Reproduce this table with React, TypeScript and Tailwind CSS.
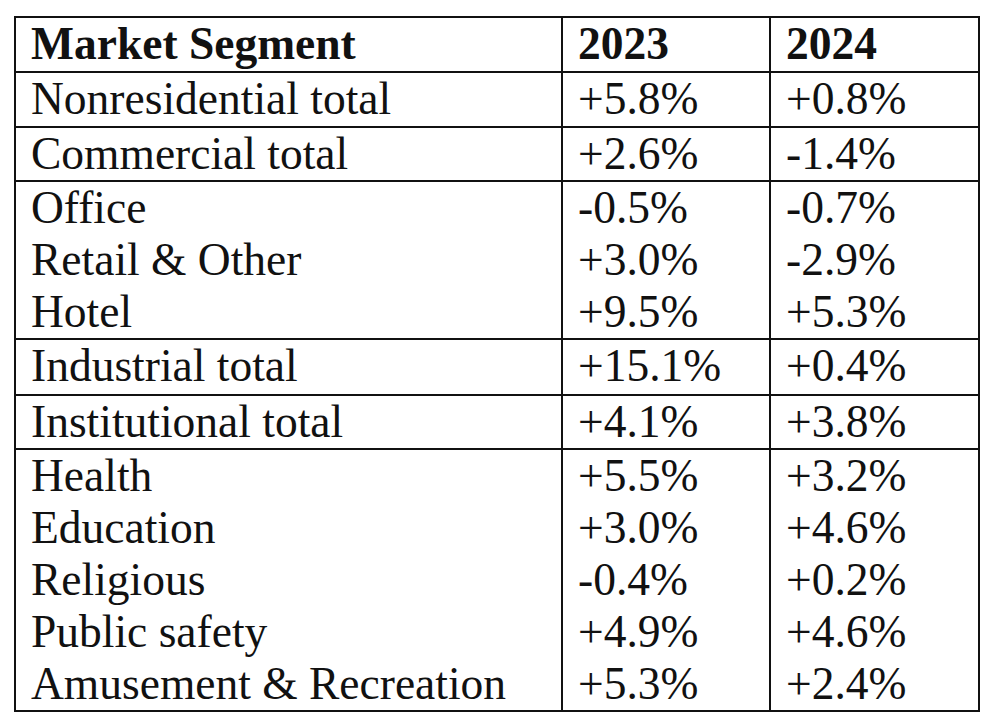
import React from "react";

type Row = {
  labels: string[];
  a: string[];
  b: string[];
  h: string;
};

const rows: Row[] = [
  { labels: ["Nonresidential total"], a: ["+5.8%"], b: ["+0.8%"], h: "h-[55px]" },
  { labels: ["Commercial total"], a: ["+2.6%"], b: ["-1.4%"], h: "h-[54px]" },
  {
    labels: ["Office", "Retail & Other", "Hotel"],
    a: ["-0.5%", "+3.0%", "+9.5%"],
    b: ["-0.7%", "-2.9%", "+5.3%"],
    h: "h-[158px]",
  },
  { labels: ["Industrial total"], a: ["+15.1%"], b: ["+0.4%"], h: "h-[56px]" },
  { labels: ["Institutional total"], a: ["+4.1%"], b: ["+3.8%"], h: "h-[54px]" },
  {
    labels: ["Health", "Education", "Religious", "Public safety", "Amusement & Recreation"],
    a: ["+5.5%", "+3.0%", "-0.4%", "+4.9%", "+5.3%"],
    b: ["+3.2%", "+4.6%", "+0.2%", "+4.6%", "+2.4%"],
    h: "h-[260px]",
  },
];

const Lines = ({ items }: { items: string[] }) => (
  <>
    {items.map((t) => (
      <div key={t} className="whitespace-nowrap">
        {t}
      </div>
    ))}
  </>
);

export default function App() {
  return (
    <div className="w-[994px] h-[720px] bg-white pl-[14px] pt-[16px] overflow-hidden">
      <table
        className="border-collapse border-2 border-[#111] text-[45.5px] leading-[52px] text-[#111] w-[964px] table-fixed"
        style={{ fontFamily: '"Liberation Serif", "Times New Roman", serif' }}
      >
        <colgroup>
          <col className="w-[547px]" />
          <col className="w-[208px]" />
          <col className="w-[209px]" />
        </colgroup>
        <thead>
          <tr className="h-[55px] border-b-2 border-[#111]">
            <th className="border-r-2 border-[#111] pl-[15px] text-left align-top font-bold">
              Market Segment
            </th>
            <th className="border-r-2 border-[#111] pl-[15px] text-left align-top font-bold">
              2023
            </th>
            <th className="pl-[15px] text-left align-top font-bold">2024</th>
          </tr>
        </thead>
        <tbody>
          {rows.map((r) => (
            <tr key={r.labels[0]} className={`${r.h} border-b-2 border-[#111]`}>
              <td className="border-r-2 border-[#111] pl-[15px] align-top">
                <Lines items={r.labels} />
              </td>
              <td className="border-r-2 border-[#111] pl-[15px] align-top">
                <Lines items={r.a} />
              </td>
              <td className="pl-[15px] align-top">
                <Lines items={r.b} />
              </td>
            </tr>
          ))}
        </tbody>
      </table>
    </div>
  );
}
